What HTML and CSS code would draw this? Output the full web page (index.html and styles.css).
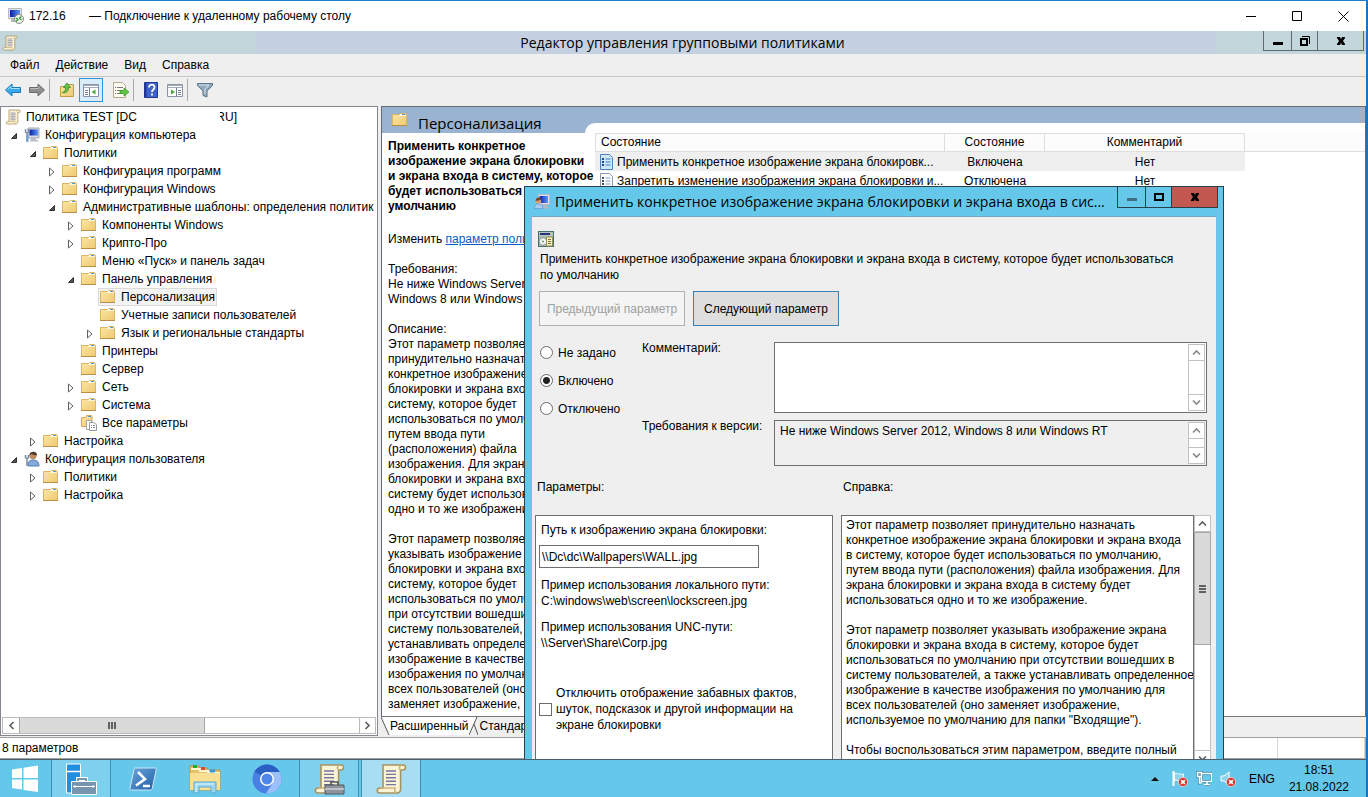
FILE: index.html
```html
<!DOCTYPE html>
<html lang="ru">
<head>
<meta charset="utf-8">
<title>172.16 — Подключение к удаленному рабочему столу</title>
<link rel="stylesheet" href="styles.css">
</head>
<body>
<svg class="sprite" aria-hidden="true">
  <defs>
    <linearGradient id="g-fold" x1="0" y1="0" x2="1" y2="1"><stop offset="0" stop-color="#fbe7a6"/><stop offset="1" stop-color="#efc971"/></linearGradient>
    <linearGradient id="g-blue" x1="0" y1="0" x2="1" y2="0"><stop offset="0" stop-color="#0a1fb0"/><stop offset="1" stop-color="#5f95ee"/></linearGradient>
    <linearGradient id="g-ps" x1="0" y1="0" x2="1" y2="1"><stop offset="0" stop-color="#6aa5d8"/><stop offset="1" stop-color="#1f5fa8"/></linearGradient>
  </defs>
  <symbol id="folder" viewBox="0 0 16 16"><path d="M.5 2.500h7l1-1h5l1 1v11h-14z" fill="url(#g-fold)" stroke="#d9b566"/><path d="M7 3.500h7" stroke="#fff6d8"/><path d="M8 2.500h2" stroke="#fff"/><path d="M10 2.500h3" stroke="#4f9bd8"/><path d="M0 13.500h15" stroke="#b98f45"/></symbol>
  <symbol id="folder-docs" viewBox="0 0 16 16"><path d="M.5 2.500h4l1-2h5l.5 1v10h-10.500z" fill="url(#g-fold)" stroke="#d3ab5b"/><path d="M7 1.500h3" stroke="#4f9bd8"/><path d="M5.500 5.500h5v9h-5z" fill="#fff" stroke="#a5a5a5"/><path d="M8.500 7.500h4l3 2v6h-7z" fill="#fff" stroke="#999"/><path d="M10 10.500h1m1 0h2m-4 2h1m1 0h2" stroke="#7c86a0"/></symbol>
  <symbol id="scroll" viewBox="0 0 16 16"><path d="M4 1h10c1.800 0 1.500 2.500 0 2.500h-1.200v9.500c0 1.200-.8 2-2 2h-8.300c-1.800 0-1.800-2.500 0-2.500h1.500z" fill="#fbf3d6" stroke="#a8935f" stroke-width=".8"/><path d="M12.800 1.200c-.8.800-.8 1.600 0 2.300M2.500 12.500h7.500c-.3 1 0 2 .8 2.400" fill="none" stroke="#cbb57c" stroke-width=".8"/><path d="M5.500 4h5m-5 1.700h5m-5 1.700h5m-5 1.700h5m-5 1.700h5" stroke="#7577a0" stroke-width=".7"/></symbol>
  <symbol id="pc-tool" viewBox="0 0 16 16"><path d="M4 1h11v10h-11z" fill="#d4d7dd" stroke="#a6a9b0"/><path d="M5.500 2.500h8.500v6h-8.500z" fill="url(#g-blue)"/><path d="M7 11h5v2h2v1.500h-8z" fill="#b9bdc6"/><path d="M1.500 2v3l1.500 1 1.500-1v-3M3 6v8" fill="none" stroke="#8191a6" stroke-width="1.500"/><path d="M2.500 8h2v7h-2z" fill="#66a0d8"/></symbol>
  <symbol id="user-tool" viewBox="0 0 16 16"><circle cx="9" cy="4.500" r="3.700" fill="#c08d60"/><path d="M5.500 5c-.5-5 7-6 7.500-1-3 1-4-1-6-1z" fill="#4b3c35"/><path d="M4 15c0-5 2-6 5-6s6 1 6 6z" fill="#83abd9" stroke="#5980b5"/><path d="M1.500 4v2.500l1.500 1 1.500-1v-2.500M3 8v7" fill="none" stroke="#798aa0" stroke-width="1.500"/></symbol>
  <symbol id="pc-user" viewBox="0 0 16 16"><path d="M4.500 .5h11v10h-11z" fill="#dde0e5" stroke="#b5bac3"/><path d="M5.500 2h8.500v7h-8.500z" fill="url(#g-blue)"/><path d="M9 11h4v2h2v1.500h-6z" fill="#b4b9c0"/><circle cx="4.500" cy="7" r="2.700" fill="#d7a272"/><path d="M1.500 7c0-4.500 6-4.500 5.500-1z" fill="#72492f"/><path d="M.5 14.500c0-4 2-4.500 4-4.500s4.500.5 4.500 4.500z" fill="#a9cdf0" stroke="#5a8cc4" stroke-width=".6"/></symbol>
  <symbol id="rdp" viewBox="0 0 16 16"><path d="M.5 .5h13v10h-13z" fill="#dfe2e6" stroke="#b5b9bf"/><path d="M2 2h10v7h-10z" fill="url(#g-blue)"/><path d="M3 11h5v3h-5z" fill="#b6bac0"/><circle cx="11" cy="11" r="4.500" fill="#eef3ee" stroke="#888"/><path d="M8 10l2 1.500-2 2m5.500-5l-2 1.500 2 2" fill="none" stroke="#3d9a3d" stroke-width="1.300"/></symbol>
  <symbol id="arrow-b" viewBox="0 0 16 16"><path d="M.5 8l6.500-6v3.500h8.500v5h-8.500v3.500z" fill="#39a9ea" stroke="#1779b8"/><path d="M2.500 7.500l3.500-3v2h8.500" fill="none" stroke="#9bdcff"/></symbol>
  <symbol id="arrow-f" viewBox="0 0 16 16"><path d="M15.500 8l-6.500-6v3.500h-8.500v5h8.500v3.500z" fill="#8f8f8f" stroke="#6b6b6b"/><path d="M1.500 6.500h8.500v-2" fill="none" stroke="#bbb"/></symbol>
  <symbol id="folder-up" viewBox="0 0 16 16"><path d="M1.500 4.500h6l1-2h6v12h-13z" fill="url(#g-fold)" stroke="#c69a48"/><path d="M3 10.500c3 0 3.500-2.500 3.500-5h-2l3.500-4.500 3.500 4.500h-2c0 4-2.500 6-6.500 5z" fill="#66c545" stroke="#37872a" stroke-width=".8"/></symbol>
  <symbol id="panel-l" viewBox="0 0 16 16"><path d="M.5 2.500h15v12h-15z" fill="#fff" stroke="#8a94a6"/><path d="M1 3.500h14M1 5.500h14" stroke="#a4adbc"/><path d="M6.500 6v8M2 8.500h3m-3 2h3m-3 2h3" stroke="#6f7f9c"/><path d="M12.500 7.500v5l-4-2.500z" fill="#42a83a"/></symbol>
  <symbol id="panel-r" viewBox="0 0 16 16"><path d="M.5 2.500h15v12h-15z" fill="#fff" stroke="#8a94a6"/><path d="M1 3.500h14M1 5.500h14" stroke="#a4adbc"/><path d="M9.500 6v8M11 8.500h3m-3 2h3m-3 2h3" stroke="#6f7f9c"/><path d="M4 7.500v5l4-2.500z" fill="#42a83a"/></symbol>
  <symbol id="export" viewBox="0 0 16 16"><path d="M.5 .5h9l3 3v12h-12z" fill="#fcfaf0" stroke="#b3ab90"/><path d="M2 5.500h1m1 0h6m-8 3h1m1 0h5m-7 3h1m1 0h5" stroke="#777"/><path d="M7 8.500h4v-2.500l5 4-5 4v-2.500h-4z" fill="#62c740" stroke="#36932a" stroke-width=".7"/></symbol>
  <symbol id="help" viewBox="0 0 16 16"><path d="M1.500 .5h13v15h-13z" fill="#3f62cc" stroke="#23348b"/><path d="M2.500 1v14" stroke="#24379b" stroke-width="2"/><path d="M6 5.500c0-4 6-3.500 5.500 0 0 2-2.500 2-2.500 4.500M9 11.500v2" fill="none" stroke="#fff" stroke-width="1.800"/></symbol>
  <symbol id="funnel" viewBox="0 0 16 16"><path d="M.5 1.500h15v2l-5.500 5.500v6l-4-1.500v-4.500l-5.500-5.500z" fill="#8fa9bc" stroke="#5d7688"/><path d="M2 3h10l-4 4v5" fill="none" stroke="#d7e5ee"/></symbol>
  <symbol id="setting" viewBox="0 0 13 16"><path d="M.5 .5h9l3 3v12h-12z" fill="#fff" stroke="#8c97a8"/><path d="M2 5h2m-2 3h2m-2 3h2" stroke="#44546e" stroke-width="1.800"/><path d="M5.500 5h5m-5 3h5m-5 3h5" stroke="#7fa0c8"/></symbol>
  <symbol id="setting-on" viewBox="0 0 13 16"><path d="M.5 .5h9l3 3v12h-12z" fill="#cfe6fb" stroke="#4d84bd"/><path d="M2 5h2m-2 3h2m-2 3h2" stroke="#1f4c86" stroke-width="1.800"/><path d="M5.500 5h5m-5 3h5m-5 3h5" stroke="#3f7cc0"/></symbol>
  <symbol id="policy" viewBox="0 0 16 16"><path d="M0 0h16v16h-16z" fill="#47706f"/><path d="M1 1h14v4h-14z" fill="#b9c4c4"/><path d="M2 2h10v2h-10z" fill="#29357f"/><path d="M12 2h2v1h-2z" fill="#f0c040"/><path d="M1 5h14v10h-14z" fill="#a9bdb8"/><circle cx="5" cy="10.500" r="3.800" fill="#f4f4f4" stroke="#8a9a92"/><circle cx="5" cy="10.500" r="1" fill="#5d9c50"/><path d="M8.500 6h6v9h-6z" fill="#f7efc0" stroke="#9a8c4a"/><path d="M10 8.500h3m-3 2h3m-3 2h3" stroke="#77703c"/></symbol>
  <symbol id="chev" viewBox="0 0 9 9"><path d="M1 6.500l3.500-3.500 3.500 3.500" fill="none" stroke="currentColor" stroke-width="1.700"/></symbol>
  <symbol id="closed" viewBox="0 0 8 10"><path d="M1.500 1v8l4.500-4z" fill="#fff" stroke="#606060"/></symbol>
  <symbol id="open" viewBox="0 0 8 10"><path d="M6.500 2.500v5h-5z" fill="#555" stroke="#333"/></symbol>
  <symbol id="winmin" viewBox="0 0 10 10"><path d="M0 6h10v3h-10z" fill="currentColor"/></symbol>
  <symbol id="winx" viewBox="0 0 10 10"><path d="M1 1h3l1 2 1-2h3v1l-2 3 2 3v1h-3l-1-2-1 2h-3v-1l2-3-2-3z" fill="currentColor"/></symbol>
  <symbol id="badge" viewBox="0 0 16 16"><circle cx="8" cy="8" r="7.500" fill="#d83a30" stroke="#fff"/><path d="M5 5l6 6m0-6l-6 6" stroke="#fff" stroke-width="2.500"/></symbol>
</svg>

<div class="session">
  <header class="rdp-bar">
    <svg class="i16"><use href="#rdp"/></svg>
    <span class="rdp-host">172.16</span>
    <span class="rdp-title">— Подключение к удаленному рабочему столу</span>
    <div class="rdp-controls">
      <button aria-label="Свернуть"><svg width="11" height="11"><path d="M0 5.500h10" stroke="#000"/></svg></button>
      <button aria-label="Развернуть"><svg width="11" height="11"><path d="M.5 .5h9v9h-9z" fill="none" stroke="#000"/></svg></button>
      <button aria-label="Закрыть"><svg width="11" height="11"><path d="M.5 .5l10 10m0-10l-10 10" stroke="#000"/></svg></button>
    </div>
  </header>

  <main class="desktop">
    <section class="editor">
      <header class="editor-title">
        <svg class="i16"><use href="#scroll"/></svg>
        <h1>Редактор управления групповыми политиками</h1>
        <div class="caption">
          <button aria-label="Свернуть"><svg width="10" height="10"><use href="#winmin"/></svg></button>
          <button class="mid" aria-label="Восстановить"><svg width="10" height="10"><path d="M1 3h6v6h-6z" fill="none" stroke="#000" stroke-width="2"/><path d="M2 .5h7.500v7.500" fill="none" stroke="#000"/></svg></button>
          <button class="wide" aria-label="Закрыть"><svg width="10" height="10"><use href="#winx"/></svg></button>
        </div>
      </header>
      <nav class="menu">
        <button>Файл</button><button>Действие</button><button>Вид</button><button>Справка</button>
      </nav>
      <div class="toolbar">
        <button aria-label="Назад"><svg class="i16"><use href="#arrow-b"/></svg></button>
        <button aria-label="Вперед"><svg class="i16"><use href="#arrow-f"/></svg></button>
        <i class="sep"></i>
        <button aria-label="Вверх"><svg class="i16"><use href="#folder-up"/></svg></button>
        <button class="on" aria-label="Дерево консоли"><svg class="i16"><use href="#panel-l"/></svg></button>
        <button aria-label="Экспорт"><svg class="i16"><use href="#export"/></svg></button>
        <i class="sep"></i>
        <button aria-label="Справка"><svg class="i16"><use href="#help"/></svg></button>
        <button aria-label="Область действий"><svg class="i16"><use href="#panel-r"/></svg></button>
        <i class="sep"></i>
        <button aria-label="Фильтр"><svg class="i16"><use href="#funnel"/></svg></button>
      </div>

      <div class="panes">
        <div class="tree-pane">
          <div class="tree">
            <div class="node root"><svg class="i16"><use href="#scroll"/></svg><span class="domain">Политика TEST [DC</span><span class="cut">RU]</span></div>
            <ul>
              <li><div class="node"><svg class="tw"><use href="#open"/></svg><svg class="i16"><use href="#pc-tool"/></svg><span>Конфигурация компьютера</span></div>
                <ul>
                  <li><div class="node"><svg class="tw"><use href="#open"/></svg><svg class="i16"><use href="#folder"/></svg><span>Политики</span></div>
                    <ul>
                      <li><div class="node"><svg class="tw"><use href="#closed"/></svg><svg class="i16"><use href="#folder"/></svg><span>Конфигурация программ</span></div></li>
                      <li><div class="node"><svg class="tw"><use href="#closed"/></svg><svg class="i16"><use href="#folder"/></svg><span>Конфигурация Windows</span></div></li>
                      <li><div class="node"><svg class="tw"><use href="#open"/></svg><svg class="i16"><use href="#folder"/></svg><span>Административные шаблоны: определения политик</span></div>
                        <ul>
                          <li><div class="node"><svg class="tw"><use href="#closed"/></svg><svg class="i16"><use href="#folder"/></svg><span>Компоненты Windows</span></div></li>
                          <li><div class="node"><svg class="tw"><use href="#closed"/></svg><svg class="i16"><use href="#folder"/></svg><span>Крипто-Про</span></div></li>
                          <li><div class="node"><svg class="tw"></svg><svg class="i16"><use href="#folder"/></svg><span>Меню «Пуск» и панель задач</span></div></li>
                          <li><div class="node"><svg class="tw"><use href="#open"/></svg><svg class="i16"><use href="#folder"/></svg><span>Панель управления</span></div>
                            <ul>
                              <li><div class="node"><svg class="tw"></svg><div class="picked"><svg class="i16"><use href="#folder"/></svg><span>Персонализация</span></div></div></li>
                              <li><div class="node"><svg class="tw"></svg><svg class="i16"><use href="#folder"/></svg><span>Учетные записи пользователей</span></div></li>
                              <li><div class="node"><svg class="tw"><use href="#closed"/></svg><svg class="i16"><use href="#folder"/></svg><span>Язык и региональные стандарты</span></div></li>
                            </ul>
                          </li>
                          <li><div class="node"><svg class="tw"></svg><svg class="i16"><use href="#folder"/></svg><span>Принтеры</span></div></li>
                          <li><div class="node"><svg class="tw"></svg><svg class="i16"><use href="#folder"/></svg><span>Сервер</span></div></li>
                          <li><div class="node"><svg class="tw"><use href="#closed"/></svg><svg class="i16"><use href="#folder"/></svg><span>Сеть</span></div></li>
                          <li><div class="node"><svg class="tw"><use href="#closed"/></svg><svg class="i16"><use href="#folder"/></svg><span>Система</span></div></li>
                          <li><div class="node"><svg class="tw"></svg><svg class="i16"><use href="#folder-docs"/></svg><span>Все параметры</span></div></li>
                        </ul>
                      </li>
                    </ul>
                  </li>
                  <li><div class="node"><svg class="tw"><use href="#closed"/></svg><svg class="i16"><use href="#folder"/></svg><span>Настройка</span></div></li>
                </ul>
              </li>
              <li><div class="node"><svg class="tw"><use href="#open"/></svg><svg class="i16"><use href="#user-tool"/></svg><span>Конфигурация пользователя</span></div>
                <ul>
                  <li><div class="node"><svg class="tw"><use href="#closed"/></svg><svg class="i16"><use href="#folder"/></svg><span>Политики</span></div></li>
                  <li><div class="node"><svg class="tw"><use href="#closed"/></svg><svg class="i16"><use href="#folder"/></svg><span>Настройка</span></div></li>
                </ul>
              </li>
            </ul>
          </div>
          <div class="hscroll">
            <button aria-label="Влево"><svg class="chev left"><use href="#chev"/></svg></button>
            <div class="hthumb"><i></i><i></i><i></i></div>
            <button aria-label="Вправо"><svg class="chev right"><use href="#chev"/></svg></button>
          </div>
        </div>

        <div class="result-pane">
          <div class="result">
            <div class="info">
              <div class="info-head"><svg class="i16"><use href="#folder"/></svg><h2>Персонализация</h2></div>
              <div class="info-body">
                <h3>Применить конкретное<br>изображение экрана блокировки<br>и экрана входа в систему, которое<br>будет использоваться по<br>умолчанию</h3>
                <p>Изменить <a href="#">параметр политики</a></p>
                <p>Требования:<br>Не ниже Windows Server 2012,<br>Windows 8 или Windows RT</p>
                <p>Описание:<br>Этот параметр позволяет<br>принудительно назначать<br>конкретное изображение экрана<br>блокировки и экрана входа в<br>систему, которое будет<br>использоваться по умолчанию,<br>путем ввода пути<br>(расположения) файла<br>изображения. Для экрана<br>блокировки и экрана входа в<br>систему будет использоваться<br>одно и то же изображение.</p>
                <p>Этот параметр позволяет<br>указывать изображение экрана<br>блокировки и экрана входа в<br>систему, которое будет<br>использоваться по умолчанию<br>при отсутствии вошедших в<br>систему пользователей, а также<br>устанавливать определенное<br>изображение в качестве<br>изображения по умолчанию для<br>всех пользователей (оно<br>заменяет изображение,</p>
              </div>
            </div>
            <div class="list">
              <table>
                <colgroup><col class="c-name"><col class="c-state"><col class="c-note"><col></colgroup>
                <thead><tr><th class="first">Состояние</th><th>Состояние</th><th>Комментарий</th><th class="rest"></th></tr></thead>
                <tbody>
                  <tr class="current"><td class="first"><div class="cell"><svg class="set"><use href="#setting-on"/></svg><span>Применить конкретное изображение экрана блокировк...</span></div></td><td>Включена</td><td>Нет</td><td class="rest"></td></tr>
                  <tr><td class="first"><div class="cell"><svg class="set"><use href="#setting"/></svg><span>Запретить изменение изображения экрана блокировки и...</span></div></td><td>Отключена</td><td>Нет</td><td class="rest"></td></tr>
                </tbody>
              </table>
            </div>
          </div>
          <div class="tabs">
            <svg class="edge" viewBox="0 0 9 19"><path d="M0 0l8 18h2v-18z" fill="#fff"/><path d="M0 0l8 18" stroke="#555"/></svg>
            <button class="tab">Расширенный</button>
            <svg class="edge" viewBox="0 0 9 19"><path d="M0 0h8l-8 18z" fill="#fff"/><path d="M8 0l-8 18M5 7l4 11" fill="none" stroke="#555"/></svg>
            <button class="tab std">Стандартный</button>
          </div>
        </div>
      </div>
      <footer class="status"><span>8 параметров</span><i></i><i></i></footer>
    </section>

    <section class="dialog">
      <header class="dialog-title">
        <svg class="i16"><use href="#pc-user"/></svg>
        <h2>Применить конкретное изображение экрана блокировки и экрана входа в сис...</h2>
        <div class="caption">
          <button class="dim" aria-label="Свернуть"><svg width="10" height="10"><use href="#winmin"/></svg></button>
          <button class="mid" aria-label="Развернуть"><svg width="10" height="10"><path d="M1 2h8v6h-8z" fill="none" stroke="#000" stroke-width="2"/></svg></button>
          <button class="wide red" aria-label="Закрыть"><svg width="10" height="10"><use href="#winx"/></svg></button>
        </div>
      </header>
      <form class="client">
        <svg class="i16 policy"><use href="#policy"/></svg>
        <p class="lead">Применить конкретное изображение экрана блокировки и экрана входа в систему, которое будет использоваться<br>по умолчанию</p>
        <div class="steps">
          <button type="button" disabled>Предыдущий параметр</button>
          <button type="button" class="next">Следующий параметр</button>
        </div>
        <div class="state">
          <div class="radios">
            <label><input type="radio" name="s"><span>Не задано</span></label>
            <label><input type="radio" name="s" checked><span>Включено</span></label>
            <label><input type="radio" name="s"><span>Отключено</span></label>
          </div>
          <label class="cap" for="note">Комментарий:</label>
          <div class="memo">
            <textarea id="note"></textarea>
            <div class="vscroll"><button type="button" aria-label="Вверх"><svg class="chev"><use href="#chev"/></svg></button><button type="button" aria-label="Вниз"><svg class="chev down"><use href="#chev"/></svg></button></div>
          </div>
          <label class="cap" for="req">Требования к версии:</label>
          <div class="memo ro">
            <textarea id="req" readonly>Не ниже Windows Server 2012, Windows 8 или Windows RT</textarea>
            <div class="vscroll"><button type="button" aria-label="Вверх"><svg class="chev"><use href="#chev"/></svg></button><button type="button" aria-label="Вниз"><svg class="chev down"><use href="#chev"/></svg></button></div>
          </div>
        </div>
        <div class="columns">
          <h3>Параметры:</h3>
          <h3 class="help-cap">Справка:</h3>
          <div class="params">
            <label for="path">Путь к изображению экрана блокировки:</label>
            <input id="path" type="text" value="\\Dc\dc\Wallpapers\WALL.jpg">
            <p>Пример использования локального пути:<br>C:\windows\web\screen\lockscreen.jpg</p>
            <p>Пример использования UNC-пути:<br>\\Server\Share\Corp.jpg</p>
            <label class="check"><input type="checkbox"><span>Отключить отображение забавных фактов,<br>шуток, подсказок и другой информации на<br>экране блокировки</span></label>
          </div>
          <div class="help">
            <div class="help-text">
              <p>Этот параметр позволяет принудительно назначать<br>конкретное изображение экрана блокировки и экрана входа<br>в систему, которое будет использоваться по умолчанию,<br>путем ввода пути (расположения) файла изображения. Для<br>экрана блокировки и экрана входа в систему будет<br>использоваться одно и то же изображение.</p>
              <p>Этот параметр позволяет указывать изображение экрана<br>блокировки и экрана входа в систему, которое будет<br>использоваться по умолчанию при отсутствии вошедших в<br>систему пользователей, а также устанавливать определенное<br>изображение в качестве изображения по умолчанию для<br>всех пользователей (оно заменяет изображение,<br>используемое по умолчанию для папки "Входящие").</p>
              <p>Чтобы воспользоваться этим параметром, введите полный</p>
            </div>
            <div class="vscroll dark"><button type="button" aria-label="Вверх"><svg class="chev"><use href="#chev"/></svg></button><div class="vthumb"><i></i><i></i><i></i></div><button type="button" aria-label="Вниз"><svg class="chev down"><use href="#chev"/></svg></button></div>
          </div>
        </div>
      </form>
    </section>
  </main>

  <footer class="taskbar">
    <button class="task start" aria-label="Пуск"><svg width="28" height="28" viewBox="0 0 28 28"><path d="M1 4.500l10-1.500v10h-10zM12.500 2.800l14.500-2.300v12.500h-14.500zM1 14.500h10v10l-10-1.500zM12.500 14.500h14.500v12.500l-14.500-2z" fill="#fff"/></svg></button>
    <button class="task run" aria-label="Диспетчер серверов"><svg width="32" height="32" viewBox="0 0 32 32"><path d="M1.500 1h14v29h-14z" fill="#208fe0" stroke="#fff"/><path d="M1.500 8.500h14" stroke="#fff" stroke-width="1.500"/><path d="M13 18v-2h8v2" fill="none" stroke="#fff" stroke-width="4"/><path d="M6.500 18.500h25v13h-25z" fill="#7795ad" stroke="#fff"/><path d="M13 18v-2h8v2" fill="none" stroke="#7795ad" stroke-width="2"/><path d="M8 23.500h22m-20-1.500v3m18-3v3" stroke="#fff"/></svg></button>
    <button class="task" aria-label="PowerShell"><svg width="28" height="24" viewBox="0 0 28 24"><path d="M6 1h20c1 0 1.500.5 1.200 1.500l-4 19c-.2 1-1 1.500-2 1.500h-19c-1 0-1.500-.5-1.200-1.500l4-19c.1-1 .5-1.500 1-1.500z" fill="url(#g-ps)" stroke="#d1e6f6"/><path d="M9 5l7 7-9 6.500M14 19h7" fill="none" stroke="#fff" stroke-width="2.500"/></svg></button>
    <button class="task" aria-label="Проводник"><svg width="32" height="30" viewBox="0 0 32 30"><path d="M1 2h9v2h8v2h13v20h-30z" fill="#e4c26b" stroke="#bd9642"/><path d="M2 5h9v2h8v2h12" fill="none" stroke="#fff8d0" stroke-width="2"/><path d="M4 2.500h4" stroke="#1ab132" stroke-width="3"/><path d="M12 4.500h4" stroke="#d84a32" stroke-width="3"/><path d="M21 7h5" stroke="#2c9be6" stroke-width="3"/><path d="M1 9h30v17h-30z" fill="#f8df92"/><path d="M5 29v-11h22v11h-5v-6h-12v6z" fill="#9bd6ee" stroke="#5aa9cf"/><path d="M7 28v-8h18" fill="none" stroke="#e2f7ff"/></svg></button>
    <button class="task" aria-label="Chromium"><svg width="30" height="30" viewBox="0 0 30 30"><circle cx="15" cy="15" r="14.500" fill="#4a7fe4"/><path d="M15 15L2.500 7.600A14.500 14.500 0 0 1 27.600 8h-12.600z" fill="#2a5fc4"/><path d="M15 8h12.600a14.500 14.500 0 0 1-13.600 21.500l7.100-11z" fill="#9dc0fa"/><circle cx="15" cy="15" r="7" fill="#fff"/><circle cx="15" cy="15" r="5.500" fill="#4f86ec"/></svg></button>
    <button class="task run" aria-label="Управление групповой политикой"><svg width="32" height="32" viewBox="0 0 16 16"><use href="#scroll" width="16" height="16"/><path d="M6 11h9.500v4.500h-9.500z" fill="#8d949b" stroke="#50565c" stroke-width=".5"/><path d="M9 11v-1.500h3.500v1.500" fill="none" stroke="#50565c" stroke-width=".8"/><path d="M6 13h9.500" stroke="#dde2e6" stroke-width=".6"/></svg></button>
    <button class="task run active" aria-label="Редактор управления групповыми политиками"><svg width="32" height="32"><use href="#scroll"/></svg></button>
    <div class="tray">
      <button aria-label="Скрытые значки"><svg width="8" height="5"><path d="M0 5l4-4 4 4z" fill="#111"/></svg></button>
      <svg class="i16"><path d="M1.500 0v15" stroke="#fff" stroke-width="2"/><path d="M2.500 2.500c3-1 4 1.500 9 .5v7c-4 1-6-1.500-9-.5z" fill="#8cd5ee" stroke="#fff"/><use href="#badge" x="6" y="6" width="10" height="10"/></svg>
      <svg class="i16"><path d="M5.500 2.500h10v8h-10zM8 13.500h6M11 11v3M1.500 1.500h4v4h-4zM3.500 6v6h2" fill="none" stroke="#3c87a3" stroke-width="3"/><path d="M5.500 2.500h10v8h-10zM8 13.500h6M11 11v3M1.500 1.500h4v4h-4zM3.500 6v6h2" fill="none" stroke="#fff" stroke-width="1.500"/></svg>
      <svg class="i16"><path d="M1 5h3l5-4v13l-5-4h-3z" fill="#8cd5ee" stroke="#fff"/><use href="#badge" x="6" y="6" width="10" height="10"/></svg>
      <span class="lang">ENG</span>
      <div class="clock"><span>18:51</span><span>21.08.2022</span></div>
    </div>
  </footer>
</div>
</body>
</html>
```
FILE: styles.css
```css
* { box-sizing: border-box; }
body { margin: 0; font: 12px/18px "Liberation Sans", Arial, sans-serif; color: #000; }
h1, h2, h3, p, ul { margin: 0; padding: 0; font-size: inherit; font-weight: 400; }
ul { list-style: none; }
button { margin: 0; padding: 0; border: 0; background: none; font: inherit; color: inherit; display: flex; align-items: center; justify-content: center; }
input, textarea { font: inherit; margin: 0; color: #000; }
svg { display: block; flex: none; }
.sprite { position: absolute; width: 0; height: 0; }
.i16 { width: 16px; height: 16px; }

.session { height: 100vh; display: flex; flex-direction: column; overflow: hidden; background: #fff; border-top: 1px solid #1a7fd0; border-right: 2px solid #1873c0; }
.rdp-bar { height: 30px; flex: none; display: flex; align-items: center; padding-left: 8px; white-space: nowrap; }
.rdp-host { width: 60px; margin-left: 5px; }
.rdp-title { flex: 1; }
.rdp-controls { display: flex; height: 100%; }
.rdp-controls button { width: 46px; }

.desktop { position: relative; flex: 1; min-height: 0; overflow: hidden; display: flex; }
.editor { flex: 1; min-width: 0; display: flex; flex-direction: column; background: #efefef; }
.editor-title { height: 23px; flex: none; display: flex; align-items: center; padding-left: 2px; background: linear-gradient(90deg, #c2d6db 0 256px, #c5d1e1 256px calc(100% - 150px), #c2d6db calc(100% - 150px)); }
.editor-title h1 { flex: 1; text-align: center; font-family: "Open Sans", sans-serif; font-size: 14px; padding-left: 84px; }
.caption { display: flex; align-self: flex-start; flex: none; }
.caption button { width: 28px; height: 21px; border: 1px solid #606878; border-width: 0 0 1px 1px; }
.caption .mid { width: 26px; }
.caption .wide { width: 47px; border-right-width: 1px; }
.editor-title .caption { margin-right: 2px; }
.editor-title .caption button { height: 20px; }
.menu { display: flex; gap: 16px; height: 22px; flex: none; padding-left: 10px; }
.toolbar { height: 30px; flex: none; display: flex; align-items: center; padding: 0 0 4px 1px; border-top: 1px solid #c6c6c6; }
.toolbar button { width: 24px; height: 24px; }
.toolbar .on { background: #d9ecfa; border: 1px solid #2e96d8; }
.toolbar .on + button { margin-left: 6px; }
.sep { width: 1px; height: 22px; background: #a9a9a9; margin: 0 5px 0 0; }

.panes { flex: 1; min-height: 0; display: flex; gap: 3px; }
.tree-pane { width: 378px; flex: none; border: 1px solid #828790; background: #fff; display: flex; flex-direction: column; }
.tree { flex: 1; min-height: 0; padding: 1px 0 0 4px; white-space: nowrap; }
.tree ul ul { padding-left: 19px; }
.node { display: flex; align-items: center; height: 18px; gap: 5px; }
.domain { width: 137px; }
.cut { width: 17px; margin-left: 52px; overflow: hidden; display: flex; justify-content: flex-end; }
.tw { width: 8px; height: 10px; margin: 2px 1px 0 5px; }
.picked { display: flex; align-items: center; gap: 5px; margin: 0 -2px; padding: 0 2px; height: 18px; background: #f3f3f3; outline: 1px solid #dadada; outline-offset: -1px; }
.hscroll { flex: none; height: 17px; margin: 0 1px 1px; display: flex; border: 1px solid #bbb; color: #606060; }
.hscroll button { width: 16px; }
.hthumb { width: 186px; margin-right: auto; background: #dadada; border: 1px solid #a6a6a6; border-width: 0 1px; display: flex; justify-content: center; align-items: center; gap: 1px; }
.hscroll button:last-child { border-left: 1px solid #bbb; }
.hthumb i { width: 2px; height: 7px; background: #606060; }
.chev { width: 9px; height: 9px; }
.left { transform: rotate(-90deg); }
.right { transform: rotate(90deg); }
.down { transform: rotate(180deg); }

.result-pane { flex: 1; min-width: 0; display: flex; flex-direction: column; }
.result { flex: 1; min-height: 0; display: flex; background: #9ab3d0; border: 1px solid #646a74; border-bottom-color: #777; }
.info { width: 203px; flex: none; display: flex; flex-direction: column; position: relative; z-index: 1; }
.info-head { height: 26px; flex: none; display: flex; align-items: center; gap: 10px; padding-left: 10px; }
.info-head h2 { font-family: "Open Sans", sans-serif; font-size: 15px; padding-top: 6px; }
.info-body { flex: 1; min-height: 0; background: #fff; padding: 6px 0 0 6px; line-height: 15px; white-space: nowrap; }
.info-body h3 { font-weight: 700; margin-bottom: 18px; }
.info-body p { margin-bottom: 15px; }
a { color: #0a5cc5; }
.list { flex: 1; min-width: 0; margin-top: 16px; padding: 10px 0 0 10px; background: #fff; border-top-left-radius: 10px; }
table { width: 100%; border-collapse: separate; border-spacing: 0; table-layout: fixed; line-height: 17px; }
.c-name { width: 350px; }
.c-state { width: 100px; }
.c-note { width: 200px; }
th { height: 19px; padding: 0; font-weight: 400; background: #fcfcfc; border: 1px solid #dedede; border-left-width: 0; }
.first { text-align: left; padding-left: 5px; }
th.first { border-left-width: 1px; }
th.rest { border-width: 0 0 1px; }
td { height: 19px; padding: 1px 0 0; text-align: center; white-space: nowrap; }
td.first { text-align: left; padding-left: 5px; }
.current td { background: #efefef; }
.current .rest { background: #fff; }
.cell { display: flex; align-items: center; gap: 4px; }
.set { width: 13px; height: 16px; }
.tabs { height: 19px; flex: none; display: flex; }
.edge { width: 9px; height: 19px; }
.tab { background: #fff; height: 18px; }
.std { background: #efefef; padding-left: 2px; }
.status { height: 22px; flex: none; display: flex; align-items: center; background: #fff; border: 1px solid #a0a0a0; border-left: 0; margin-top: 1px; }
.status span { flex: 1; padding-left: 2px; }
.status i { width: 87px; height: 20px; border-left: 1px solid #d5d5d5; }
.status i:last-child { width: 1px; }

.dialog { position: absolute; z-index: 2; left: 524px; right: 142px; top: 155px; bottom: 0; background: #65c8ea; border: 1px solid #27404c; border-bottom: 0; padding: 0 7px; display: flex; flex-direction: column; overflow: hidden; }
.dialog-title { height: 29px; flex: none; display: flex; align-items: center; gap: 5px; padding-left: 2px; margin-right: -2px; white-space: nowrap; }
.dialog-title h2 { flex: 1; min-width: 0; font-family: "Open Sans", sans-serif; font-size: 14px; overflow: hidden; }
.dialog .caption button { border-color: #27404c; }
.dialog .caption .dim { color: #3c6f80; }
.dialog .caption .red { background: #c35850; }
.client { flex: 1; min-height: 0; display: flex; flex-direction: column; background: #efefef; border: 1px solid #72a8be; border-width: 1px 0 0; padding: 14px 3px 0 3px; }
.policy { margin-left: 3px; flex: none; }
.lead { padding: 4px 0 0 5px; line-height: 16px; white-space: nowrap; }
.steps { display: flex; gap: 8px; margin: 8px 0 0 4px; }
.steps button { width: 146px; height: 35px; background: #f4f4f4; border: 1px solid #adb2b5; color: #a0a0a0; white-space: nowrap; }
.steps .next { background: #dedede; border-color: #3c7fb1; color: #000; }
.state { display: grid; grid-template-columns: 98px 128px 1fr; grid-template-rows: 71px 46px; column-gap: 4px; row-gap: 7px; margin: 16px 6px 0 5px; }
.radios { grid-row: 1 / 3; display: flex; flex-direction: column; gap: 10px; padding-top: 2px; }
.radios label { display: flex; align-items: center; gap: 5px; height: 18px; }
input[type=radio] { appearance: none; width: 13px; height: 13px; border: 1px solid #6b6b6b; border-radius: 50%; background: #fff; margin-bottom: 2px; }
input[type=radio]:checked { background: radial-gradient(circle, #222 0 3px, #fff 4px); }
.cap { line-height: 12px; white-space: nowrap; }
.memo { display: flex; border: 1px solid #6f6f6f; background: #fff; padding: 1px; }
.ro { background: #efefef; }
textarea { flex: 1; min-width: 0; border: 0; padding: 1px 4px; resize: none; background: none; overflow: hidden; line-height: 16px; outline: 0; }
.vscroll { width: 17px; flex: none; border: 1px solid #c2c2c2; display: flex; flex-direction: column; justify-content: space-between; background: #fff; color: #8a8a8a; }
.vscroll button { height: 16px; flex: none; border-bottom: 1px solid #c2c2c2; }
.vscroll button:last-child { border-bottom: 0; border-top: 1px solid #c2c2c2; }
.columns { flex: 1; min-height: 0; display: grid; grid-template-columns: 298px 1fr; grid-template-rows: 37px 1fr; column-gap: 8px; margin: 12px 2px 0 0; }
.columns h3 { padding-left: 2px; }
.params { border: 1px solid #6f6f6f; border-bottom: 0; background: #fff; padding: 6px 3px 0; line-height: 16px; white-space: nowrap; overflow: hidden; }
.params > label { display: block; padding-left: 2px; }
.params input[type=text] { display: block; width: 220px; height: 23px; border: 1px solid #6f6f6f; padding: 0 2px; margin: 7px 0 9px; background: #fff; outline: 0; }
.params p { padding-left: 2px; margin-bottom: 10px; }
.params .check { display: flex; align-items: center; gap: 4px; padding: 0; margin-top: 34px; }
input[type=checkbox] { appearance: none; width: 13px; height: 13px; border: 1px solid #6b6b6b; background: #fff; }
.help { display: flex; min-height: 0; min-width: 0; }
.help-text { flex: 1; min-width: 0; border: 1px solid #6f6f6f; border-bottom: 0; background: #fff; padding: 2px 0 0 4px; line-height: 15px; white-space: nowrap; overflow: hidden; }
.help-text p { margin-bottom: 15px; }
.dark { color: #606060; margin-bottom: -8px; }
.vthumb { height: 113px; margin: 0 -1px auto; background: #dadada; border: 1px solid #a6a6a6; display: flex; flex-direction: column; align-items: center; justify-content: center; gap: 1px; }
.vthumb i { width: 7px; height: 2px; background: #606060; }

.taskbar { height: 38px; flex: none; display: flex; gap: 2px; background: #65c8ea; border-top: 1px solid #47606c; }
.task { width: 60px; flex: none; }
.start { width: 49px; }
.run { background: #7dd1ee; border: 1px solid #3f90ae; border-width: 0 1px; }
.active { background: #a7def3; }
.tray { margin-left: auto; display: flex; align-items: center; gap: 8px; padding-right: 17px; }
.tray > button { width: 10px; height: 16px; margin-right: 4px; }
.lang { margin-left: 5px; }
.clock { display: flex; flex-direction: column; align-items: center; line-height: 17px; margin-left: 6px; }
```
